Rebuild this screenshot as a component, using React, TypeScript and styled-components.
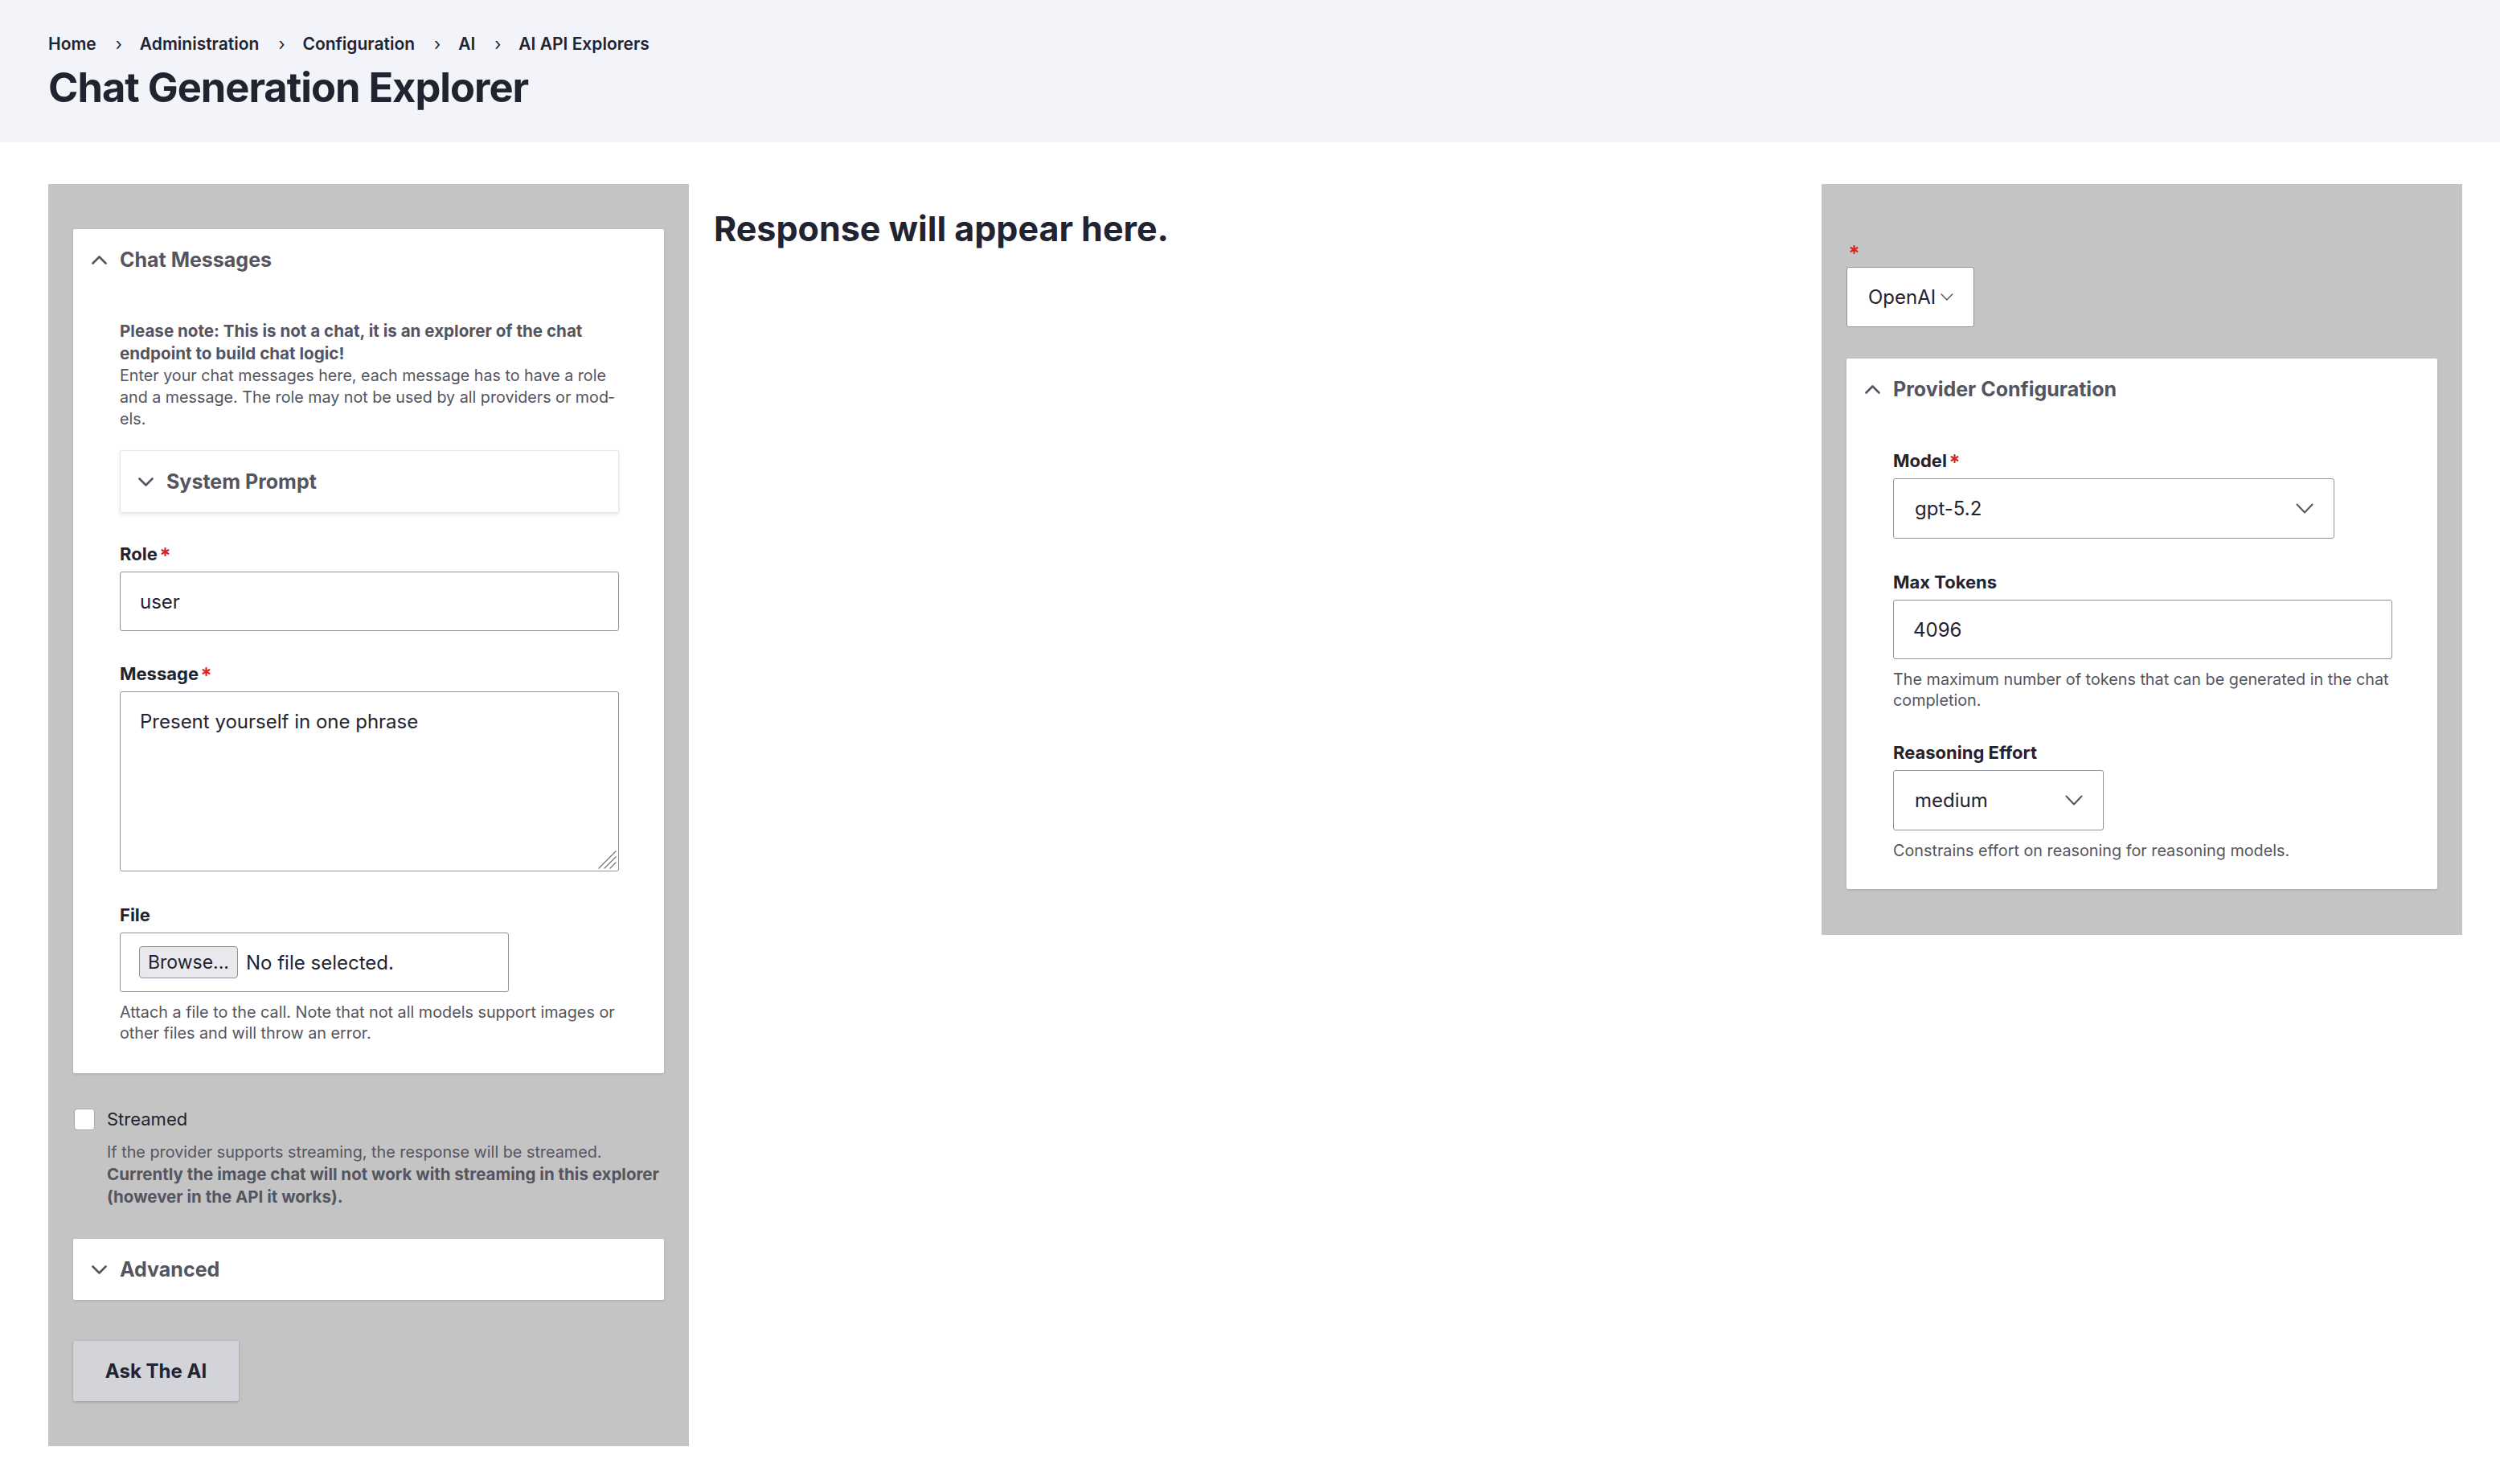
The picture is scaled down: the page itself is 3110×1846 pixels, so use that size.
import React from "react";
import styled, { createGlobalStyle } from "styled-components";

const GlobalStyle = createGlobalStyle`
  * { box-sizing: border-box; }
  body {
    margin: 0;
    background: #fff;
    font-family: Inter, "Noto Sans", sans-serif;
    color: #222330;
  }
`;

const Chevron = ({ up, w = 19, h = 11, sw = 2.6 }: { up?: boolean; w?: number; h?: number; sw?: number }) => (
  <svg width={w} height={h} viewBox={`0 0 ${w} ${h}`} fill="none">
    <polyline
      points={up ? `1.5,${h - 1.5} ${w / 2},1.5 ${w - 1.5},${h - 1.5}` : `1.5,1.5 ${w / 2},${h - 1.5} ${w - 1.5},1.5`}
      stroke="#545560"
      strokeWidth={sw}
      strokeLinecap="round"
      strokeLinejoin="round"
    />
  </svg>
);

// red asterisk for required fields, drawn the way the theme draws it
const Asterisk = () => (
  <svg width="11" height="11" viewBox="0 0 11 11">
    <g stroke="#dc2323" strokeWidth="2.2" strokeLinecap="round">
      <line x1="5.5" y1="1" x2="5.5" y2="10" />
      <line x1="1.6" y1="3.25" x2="9.4" y2="7.75" />
      <line x1="1.6" y1="7.75" x2="9.4" y2="3.25" />
    </g>
  </svg>
);

const Grip = () => (
  <svg width="24" height="24" viewBox="0 0 24 24">
    <g stroke="#7a7c85" strokeWidth="1.4" strokeLinecap="round">
      <line x1="23" y1="2" x2="2" y2="23" />
      <line x1="23" y1="9" x2="9" y2="23" />
      <line x1="23" y1="16" x2="16" y2="23" />
    </g>
  </svg>
);

export default function App() {
  return (
    <>
      <GlobalStyle />
      <Header>
        <Crumbs>
          <span>Home</span>
          <Sep>›</Sep>
          <span>Administration</span>
          <Sep>›</Sep>
          <span>Configuration</span>
          <Sep>›</Sep>
          <span>AI</span>
          <Sep>›</Sep>
          <span>AI API Explorers</span>
        </Crumbs>
        <Title>Chat Generation Explorer</Title>
      </Header>

      <Main>
        <Panel $top={56} $bottom={56}>
          <Card>
            <Summary>
              <Chevron up />
              Chat Messages
            </Summary>
            <CardBody $bottom={37}>
              <Note>
                <b>Please note: This is not a chat, it is an explorer of the chat endpoint to build chat logic!</b>
                <br />
                Enter your chat messages here, each message has to have a role and a message. The role may not be used
                by all providers or mod{"\u00AD"}els.
              </Note>
              <InnerDetails>
                <Chevron />
                System Prompt
              </InnerDetails>
              <FormItem $gap={37}>
                <Label>
                  Role
                  <Req>
                    <Asterisk />
                  </Req>
                </Label>
                <TextInput defaultValue="user" />
              </FormItem>
              <FormItem $gap={39}>
                <Label>
                  Message
                  <Req>
                    <Asterisk />
                  </Req>
                </Label>
                <AreaWrap>
                  <TextArea defaultValue="Present yourself in one phrase" />
                  <GripSpot>
                    <Grip />
                  </GripSpot>
                </AreaWrap>
              </FormItem>
              <FormItem $gap={40}>
                <Label>File</Label>
                <FileBox>
                  <BrowseButton>Browse...</BrowseButton>
                  <span>No file selected.</span>
                </FileBox>
                <Description>
                  Attach a file to the call. Note that not all models support images or other files and will throw an
                  error.
                </Description>
              </FormItem>
            </CardBody>
          </Card>

          <CheckRow>
            <CheckBox />
            <CheckLabel>Streamed</CheckLabel>
          </CheckRow>
          <StreamNote>
            If the provider supports streaming, the response will be streamed.
            <br />
            <b>Currently the image chat will not work with streaming in this explorer (however in the API it works).</b>
          </StreamNote>

          <Collapsed>
            <Chevron />
            Advanced
          </Collapsed>

          <AskButton>Ask The AI</AskButton>
        </Panel>

        <Response>Response will appear here.</Response>

        <Panel $top={67} $bottom={57}>
          <Label>
            <Req $solo>
              <Asterisk />
            </Req>
          </Label>
          <Select $width={159} $gap={6}>
            <span>OpenAI</span>
            <Chevron w={22} h={13} sw={2} />
          </Select>
          <Card $gap={39}>
            <Summary>
              <Chevron up />
              Provider Configuration
            </Summary>
            <CardBody $bottom={35}>
              <FormItem>
                <Label>
                  Model
                  <Req>
                    <Asterisk />
                  </Req>
                </Label>
                <Select $width={549}>
                  <span>gpt-5.2</span>
                  <Chevron w={22} h={13} sw={2} />
                </Select>
              </FormItem>
              <FormItem $gap={40}>
                <Label>Max Tokens</Label>
                <TextInput defaultValue="4096" />
                <Description>The maximum number of tokens that can be generated in the chat completion.</Description>
              </FormItem>
              <FormItem $gap={38}>
                <Label>Reasoning Effort</Label>
                <Select $width={262}>
                  <span>medium</span>
                  <Chevron w={22} h={13} sw={2} />
                </Select>
                <Description>Constrains effort on reasoning for reasoning models.</Description>
              </FormItem>
            </CardBody>
          </Card>
        </Panel>
      </Main>
    </>
  );
}

const Header = styled.header`
  background: #f3f4f9;
  height: 177px;
  padding: 41px 60px 0;
`;

const Crumbs = styled.nav`
  display: flex;
  align-items: center;
  font-size: 21px;
  line-height: 28px;
  font-weight: 600;
  color: #222330;
`;

const Sep = styled.span`
  margin: 0 22px 0 24px;
  font-weight: 400;
`;

const Title = styled.h1`
  margin: 9px 0 0;
  font-size: 50.6px;
  line-height: 62px;
  font-weight: 700;
  letter-spacing: -0.02em;
`;

const Main = styled.main`
  display: grid;
  grid-template-columns: 797px 1fr 797px;
  column-gap: 31px;
  align-items: start;
  padding: 52px 47px 40px 60px;
`;

const Panel = styled.div<{ $top: number; $bottom: number }>`
  background: #c4c4c4;
  padding: ${(p) => p.$top}px 31px ${(p) => p.$bottom}px;
`;

const Card = styled.section<{ $gap?: number }>`
  background: #fff;
  border-radius: 2px;
  box-shadow: 0 1px 3px rgba(0, 0, 0, 0.14);
  margin-top: ${(p) => p.$gap ?? 0}px;
`;

const Summary = styled.div`
  display: flex;
  align-items: center;
  gap: 16px;
  height: 76px;
  padding-left: 23px;
  font-size: 25px;
  font-weight: 700;
  color: #545560;
`;

const CardBody = styled.div<{ $bottom?: number }>`
  padding: 37px 56px ${(p) => p.$bottom ?? 39}px 58px;
`;

const Note = styled.p`
  margin: 0 -10px 0 0;
  font-size: 19.7px;
  line-height: 27px;
  color: #545560;
  b {
    font-size: 20.6px;
    font-weight: 700;
  }
`;

const InnerDetails = styled.div`
  display: flex;
  align-items: center;
  gap: 16px;
  height: 78px;
  margin-top: 25px;
  padding-left: 22px;
  border: 1px solid #e4e5ea;
  border-radius: 2px;
  box-shadow: 0 2px 4px rgba(0, 0, 0, 0.1);
  font-size: 25px;
  font-weight: 700;
  color: #545560;
`;

const FormItem = styled.div<{ $gap?: number }>`
  margin-top: ${(p) => p.$gap ?? 0}px;
`;

const Label = styled.div`
  display: flex;
  align-items: center;
  height: 28px;
  margin-bottom: 8px;
  font-size: 22px;
  line-height: 28px;
  font-weight: 700;
  color: #222330;
`;

const Req = styled.span<{ $solo?: boolean }>`
  display: inline-flex;
  margin-left: 4px;
  margin-top: ${(p) => (p.$solo ? 0 : -6)}px;
`;

const fieldBase = `
  display: block;
  width: 100%;
  border: 1px solid #8e929c;
  border-radius: 3px;
  background: #fff;
  font-family: Inter, "Noto Sans", sans-serif;
  font-size: 24px;
  color: #222330;
  outline: none;
`;

const TextInput = styled.input`
  ${fieldBase}
  height: 74px;
  padding: 0 24px;
`;

const AreaWrap = styled.div`
  position: relative;
`;

const TextArea = styled.textarea`
  ${fieldBase}
  height: 224px;
  padding: 19px 24px;
  line-height: 36px;
  resize: none;
`;

const GripSpot = styled.span`
  position: absolute;
  right: 3px;
  bottom: 3px;
  display: flex;
  pointer-events: none;
`;

const FileBox = styled.div`
  display: flex;
  align-items: center;
  gap: 10px;
  width: 484px;
  height: 74px;
  padding-left: 23px;
  border: 1px solid #8e929c;
  border-radius: 3px;
  font-size: 24px;
  color: #222330;
`;

const BrowseButton = styled.span`
  display: inline-flex;
  align-items: center;
  justify-content: center;
  width: 123px;
  height: 40px;
  background: #e9e9ed;
  border: 1px solid #8f8f9d;
  border-radius: 4px;
  font-size: 23px;
`;

const Description = styled.div`
  margin-top: 12px;
  font-size: 19.8px;
  line-height: 26px;
  color: #545560;
`;

const CheckRow = styled.label`
  display: flex;
  align-items: center;
  gap: 15px;
  margin-top: 43px;
  padding-left: 1px;
`;

const CheckBox = styled.span`
  width: 26px;
  height: 27px;
  background: #fff;
  border: 1px solid #a5a7ad;
  border-radius: 4px;
`;

const CheckLabel = styled.span`
  font-size: 22px;
  line-height: 28px;
  color: #222330;
`;

const StreamNote = styled.p`
  margin: 14px -12px 0 0;
  padding-left: 42px;
  font-size: 19.8px;
  line-height: 27px;
  color: #545560;
  b {
    font-size: 20.5px;
    font-weight: 700;
  }
`;

const Collapsed = styled.div`
  display: flex;
  align-items: center;
  gap: 16px;
  height: 76px;
  margin-top: 38px;
  padding-left: 23px;
  background: #fff;
  border-radius: 2px;
  box-shadow: 0 1px 3px rgba(0, 0, 0, 0.14);
  font-size: 25px;
  font-weight: 700;
  color: #545560;
`;

const AskButton = styled.button`
  display: block;
  width: 206px;
  height: 75px;
  margin-top: 51px;
  background: #d3d4d9;
  border: none;
  border-radius: 2px;
  box-shadow: 0 1px 3px rgba(0, 0, 0, 0.25);
  font-family: Inter, "Noto Sans", sans-serif;
  font-size: 24px;
  font-weight: 700;
  color: #222330;
`;

const Response = styled.h2`
  margin: 30px 0 0;
  font-size: 43px;
  line-height: 50px;
  font-weight: 700;
`;

const Select = styled.div<{ $width: number; $gap?: number }>`
  display: flex;
  align-items: center;
  justify-content: ${(p) => (p.$gap ? "flex-start" : "space-between")};
  gap: ${(p) => p.$gap ?? 0}px;
  width: ${(p) => p.$width}px;
  height: 75px;
  padding: 0 25px 0 26px;
  background: #fff;
  border: 1px solid #8e929c;
  border-radius: 3px;
  font-size: 24px;
  color: #222330;
`;
